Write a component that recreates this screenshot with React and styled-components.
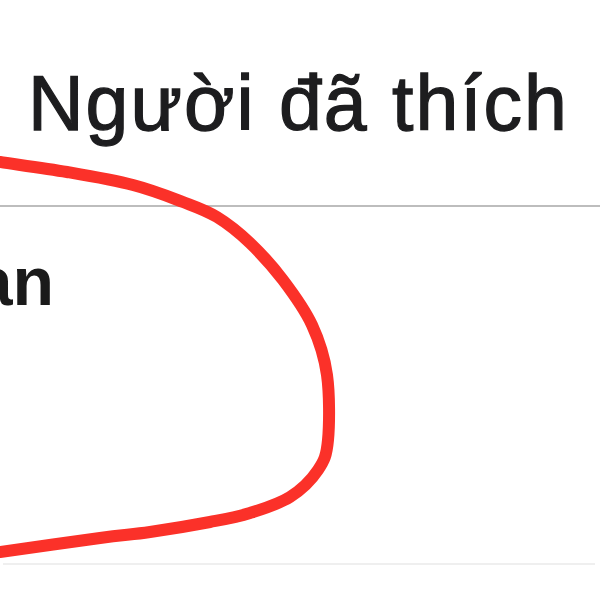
import React from 'react';
import styled, { createGlobalStyle } from 'styled-components';

const GlobalStyle = createGlobalStyle`
  html, body {
    margin: 0;
    padding: 0;
    background: #fff;
  }
  body {
    font-family: 'Liberation Sans', Arial, sans-serif;
  }
`;

const Screen = styled.div`
  position: relative;
  width: 600px;
  height: 600px;
  overflow: hidden;
  background: #fff;
`;

const NavBar = styled.header`
  box-sizing: border-box;
  height: 207px;
  padding: 65px 0 0 28px;
  border-bottom: 2px solid #bdbdbd;
`;

const Title = styled.h1`
  margin: 0;
  font-size: 77px;
  line-height: 77px;
  font-weight: 400;
  letter-spacing: 2px;
  color: #1d1d1f;
  -webkit-text-stroke: 1.3px #1d1d1f;
  white-space: nowrap;
`;

const Row = styled.div`
  box-sizing: border-box;
  height: 356px;
  padding-top: 40px;
  display: flex;
  align-items: flex-start;
`;

const NameClip = styled.div`
  width: 54px;
  display: flex;
  justify-content: flex-end;
  overflow: hidden;
`;

const Name = styled.span`
  flex: none;
  font-size: 68px;
  line-height: 68px;
  font-weight: 700;
  color: #1a1a1a;
  white-space: nowrap;
`;

const Divider = styled.div`
  height: 2px;
  margin: 0 5px 0 3px;
  background: #efefef;
`;

const Annotation = styled.svg`
  position: absolute;
  inset: 0;
  pointer-events: none;
`;

const points = [
  [-10, 160], [0, 162], [67, 172], [133, 185], [183, 202], [217, 217],
  [250, 243], [283, 280], [312, 325], [327, 375], [328, 440],
  [318, 470], [290, 497], [250, 513], [210, 522], [150, 532],
  [100, 538], [0, 552], [-10, 554],
];

// catmull-rom -> cubic bezier for a smooth hand-drawn stroke
const smoothPath = (pts) => {
  let d = `M ${pts[0][0]} ${pts[0][1]}`;
  for (let i = 0; i < pts.length - 1; i++) {
    const p0 = pts[i - 1] || pts[i];
    const p1 = pts[i];
    const p2 = pts[i + 1];
    const p3 = pts[i + 2] || p2;
    const c1 = [p1[0] + (p2[0] - p0[0]) / 6, p1[1] + (p2[1] - p0[1]) / 6];
    const c2 = [p2[0] - (p3[0] - p1[0]) / 6, p2[1] - (p3[1] - p1[1]) / 6];
    d += ` C ${c1[0]} ${c1[1]}, ${c2[0]} ${c2[1]}, ${p2[0]} ${p2[1]}`;
  }
  return d;
};

const App = () => {
  return (
    <Screen>
      <GlobalStyle />
      <NavBar>
        <Title>Người đã thích</Title>
      </NavBar>
      <Row>
        <NameClip>
          <Name>Ngọc Lan</Name>
        </NameClip>
      </Row>
      <Divider />
      <Annotation width='600' height='600' viewBox='0 0 600 600'>
        <path
          d={smoothPath(points)}
          fill='none'
          stroke='#fb3129'
          strokeWidth='12'
          strokeLinecap='round'
          strokeLinejoin='round'
        />
      </Annotation>
    </Screen>
  );
};

export default App;
